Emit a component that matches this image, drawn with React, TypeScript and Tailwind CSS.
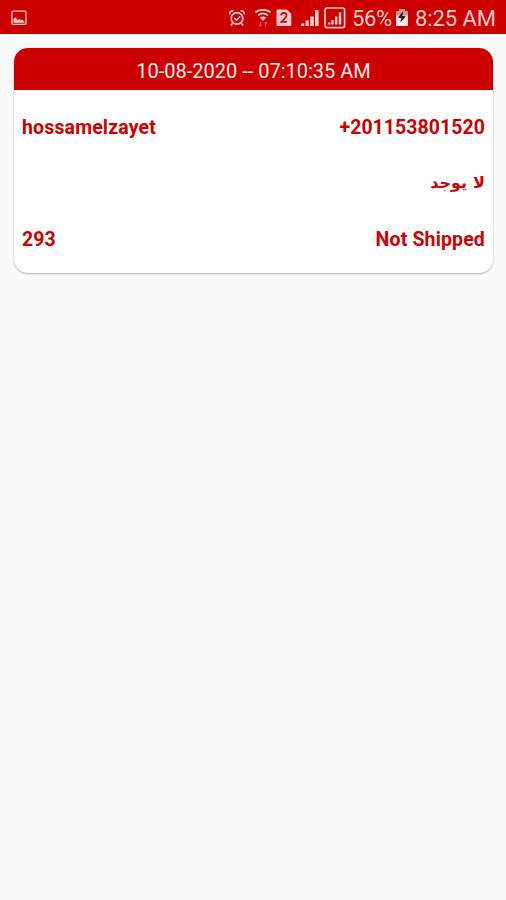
const orders = [
  {
    date: '10-08-2020 -- 07:10:35 AM',
    name: 'hossamelzayet',
    phone: '+201153801520',
    note: 'لا يوجد',
    total: '293',
    status: 'Not Shipped'
  }
];

function PictureIcon() {
  return (
    <svg width="16" height="16" viewBox="0 0 16 16" fill="none">
      <rect x="1" y="1.2" width="14" height="13.2" rx="1.2" stroke="currentColor" strokeWidth="1.3" />
      <path d="M2.5 12.8V9L4.6 7.2l2.2 3 1.4-1.4 1.6 1.6 1.4-1 2.3 2.6v.8z" fill="currentColor" />
    </svg>
  );
}

function AlarmIcon() {
  return (
    <svg width="18" height="18" viewBox="0 0 18 18" fill="none" stroke="currentColor">
      <circle cx="9" cy="9.4" r="5.8" strokeWidth="1.7" />
      <path d="M6.2 9.1l2.3 2.2 3.6-3.9" strokeWidth="1.5" />
      <path d="M1.6 5.4C1.5 3 3 1.7 5.4 1.9M16.4 5.4C16.5 3 15 1.7 12.6 1.9" strokeWidth="1.7" />
      <path d="M4.7 14.2l-1.9 2.3M13.3 14.2l1.9 2.3" strokeWidth="1.7" />
    </svg>
  );
}

function WifiIcon() {
  return (
    <svg width="18" height="18" viewBox="0 0 18 18" fill="none" stroke="currentColor">
      <path d="M1.4 3.3C5.8 0 12.2 0 16.6 3.3" strokeWidth="1.8" />
      <path d="M4 6.3c3-2.3 7-2.3 10 0" strokeWidth="1.7" />
      <path d="M6.2 8.8c1.7-1.4 3.9-1.4 5.6 0L9 11.6z" fill="currentColor" strokeWidth="0.6" />
      <g opacity="0.5">
        <path d="M6.6 13v4.2M5.2 15.8l1.4 1.4M11.4 17.2V13M12.8 14.4L11.4 13" strokeWidth="1.2" />
      </g>
    </svg>
  );
}

function SimIcon() {
  return (
    <svg width="16" height="18" viewBox="0 0 16 18">
      <path d="M1.8.6h9.1l4.4 4.3v10.9c0 .8-.5 1.3-1.3 1.3H1.8c-.8 0-1.3-.5-1.3-1.3V1.9C.5 1.1 1 .6 1.8.6z" fill="currentColor" />
      <path d="M5 6.3c.2-1.6 1.3-2.4 2.8-2.4 1.7 0 2.8.9 2.8 2.4 0 1.2-.8 2.1-1.9 3.2L5.3 12.9h5.6" fill="none" stroke="#cc0000" strokeWidth="1.7" />
    </svg>
  );
}

function SignalIcon() {
  return (
    <svg width="18" height="18" viewBox="0 0 18 18" fill="currentColor">
      <path d="M0 14.6h3.2V17H0zM4.6 11.6h3.2V17H4.6zM9.2 7.4h3.6V17H9.2zM14 1h3.6v16H14z" />
    </svg>
  );
}

function BoxedSignalIcon() {
  return (
    <svg width="22" height="22" viewBox="0 0 22 22" fill="currentColor">
      <rect x="1" y="1" width="19.6" height="19.6" rx="2.2" fill="none" stroke="currentColor" strokeWidth="1.7" />
      <path d="M4.2 15.4h2.2v2H4.2zM7.4 12.9h2.3v4.5H7.4zM11 9.6h2.4v7.8H11zM14.8 5.4h2.4v12h-2.4z" />
    </svg>
  );
}

function BatteryIcon() {
  return (
    <svg width="12" height="17" viewBox="0 0 12 17">
      <path d="M0 2h3V0h6v2h3v5H0z" fill="#df8f8f" />
      <path d="M0 6.5h12V17H0z" fill="#ffe5e5" />
      <path d="M7.2 2.3L2 8.6l3.4.7-1.2 4.5 5.6-6.3-3.5-.7z" fill="#241818" />
    </svg>
  );
}

function StatusBar() {
  return (
    <header className="flex h-[34px] items-center justify-between bg-[#cc0000] px-[11px] pt-px text-[#ffc9c9]">
      <PictureIcon />
      <div className="flex items-center">
        <AlarmIcon />
        <span className="ml-2"><WifiIcon /></span>
        <span className="ml-1"><SimIcon /></span>
        <span className="ml-[9px]"><SignalIcon /></span>
        <span className="ml-[5px]"><BoxedSignalIcon /></span>
        <span className="ml-[6px] w-[40px] whitespace-nowrap pt-[2px] text-[22px] leading-7 tracking-[-0.4px]">56%</span>
        <span className="ml-[4px]"><BatteryIcon /></span>
        <span className="ml-[7px] w-[80px] whitespace-nowrap pt-[2px] text-[22px] leading-7 tracking-[-0.1px]">8:25 AM</span>
      </div>
    </header>
  );
}

export default function App() {
  return (
    <div className="min-h-screen bg-[#fafafa] font-['Roboto','DejaVu_Sans',sans-serif]">
      <StatusBar />

      {/* Orders */}
      <main className="pl-[14px] pr-[13px] pt-[14px]">
        {orders.map((order) => (
          <article
            key={order.phone}
            className="h-[225px] overflow-hidden rounded-[14px] bg-white text-[19.5px] font-bold text-[#cc0000] shadow-[0_1px_2px_rgba(0,0,0,0.3)]"
          >
            <div className="flex h-[42px] items-center justify-center bg-[#cc0000] pt-[3px] text-[20px] font-normal text-[#ffeaea]">
              {order.date}
            </div>
            <div className="px-2 pt-[10px]">
              <div className="flex h-[56px] items-center justify-between">
                <span className="tracking-[0.15px]">{order.name}</span>
                <span className="tracking-[0.05px]">{order.phone}</span>
              </div>
              <div className="flex h-[56px] items-center justify-end pb-[3px]">
                <span dir="rtl" lang="ar" className="text-[16px] [word-spacing:2px]">{order.note}</span>
              </div>
              <div className="flex h-[56px] items-center justify-between">
                <span>{order.total}</span>
                <span className="tracking-[0.15px]">{order.status}</span>
              </div>
            </div>
          </article>
        ))}
      </main>
    </div>
  );
}
